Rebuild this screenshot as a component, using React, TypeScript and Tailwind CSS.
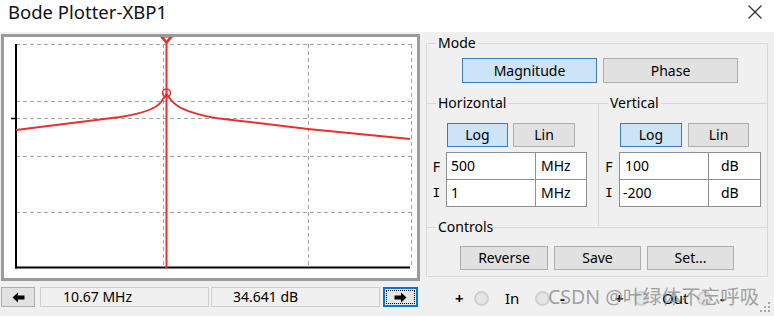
import React from "react";

const Btn = ({
  className = "",
  sel = false,
  children,
}: {
  className?: string;
  sel?: boolean;
  children: React.ReactNode;
}) => (
  <div
    className={`flex items-center justify-center border text-[14px] leading-none text-black ${
      sel ? "bg-[#cce4f7] border-[#3d7ab8]" : "bg-[#e1e1e1] border-[#adadad]"
    } ${className}`}
  >
    {children}
  </div>
);

const Cell = ({ className = "", children }: { className?: string; children: React.ReactNode }) => (
  <div className={`h-[28px] border border-[#8f8f8f] bg-white flex items-center text-[14px] leading-none text-black ${className}`}>
    {children}
  </div>
);

const ArrowLeft = () => (
  <svg width="13" height="11" viewBox="0 0 13 11">
    <path d="M0.5,5.5 L6,0.5 L6,3.5 L12.5,3.5 L12.5,7.5 L6,7.5 L6,10.5 Z" fill="#000" />
  </svg>
);
const ArrowRight = () => (
  <svg width="13" height="11" viewBox="0 0 13 11">
    <path d="M12.5,5.5 L7,0.5 L7,3.5 L0.5,3.5 L0.5,7.5 L7,7.5 L7,10.5 Z" fill="#000" />
  </svg>
);

const Radio = () => (
  <span className="inline-block w-[15px] h-[15px] rounded-full border-2 border-[#cfcfcf] bg-[#e6e6e6]" />
);

const Plot = () => {
  const hs = [44.5, 101.5, 118.5, 156.5, 212.5];
  const vs = [163.5, 308.5, 411.5];
  const red = "#e8312f";
  return (
    <svg width="413" height="241" viewBox="4 37 413 241" className="block">
      <g stroke="#a3a3a3" strokeWidth="1" strokeDasharray="4 3">
        {hs.map((y) => (
          <line key={"h" + y} x1="16" y1={y} x2="411" y2={y} />
        ))}
        {vs.map((x) => (
          <line key={"v" + x} x1={x} y1="44" x2={x} y2="268" />
        ))}
      </g>
      <line x1="16" y1="44" x2="16" y2="268.5" stroke="#000" strokeWidth="2" />
      <line x1="15" y1="267.5" x2="410" y2="267.5" stroke="#000" strokeWidth="2" />
      <line x1="11" y1="118.5" x2="16" y2="118.5" stroke="#000" strokeWidth="1.5" />
      <path
        d="M16,130 L120,117 C140,114 155,110 161,102 L166.5,94 L171,100 C177,108 190,113 215,118 L308,129 L410,139"
        fill="none"
        stroke={red}
        strokeWidth="2"
      />
      <line x1="166.5" y1="37" x2="166.5" y2="268" stroke={red} strokeWidth="2" />
      <circle cx="166.5" cy="93" r="4" fill="none" stroke={red} strokeWidth="1.5" />
      <path d="M160,37 L173,37 L166.5,44.5 Z" fill={red} />
      <path d="M164,37.5 L169,37.5 L166.5,40.5 Z" fill="#fff" />
    </svg>
  );
};

export default function App() {
  return (
    <div className="relative w-[774px] h-[316px] overflow-hidden bg-[#f0f0f0] flex flex-col font-['Noto_Sans',sans-serif] text-black">
      {/* Title bar */}
      <div className="h-[32px] bg-white flex justify-between shrink-0">
        <div className="pl-[8px] mt-[1px] text-[18.5px] leading-[22px] text-[#111]">Bode Plotter-XBP1</div>
        <svg width="14" height="14" viewBox="0 0 14 14" className="mr-[12px] mt-[5px]">
          <line x1="0.5" y1="0.5" x2="13.5" y2="13.5" stroke="#333" strokeWidth="1.2" />
          <line x1="13.5" y1="0.5" x2="0.5" y2="13.5" stroke="#333" strokeWidth="1.2" />
        </svg>
      </div>

      <div className="flex flex-1">
        {/* Left column */}
        <div className="w-[421px] pl-[1px] pt-[2px] flex flex-col">
          <div className="w-[419px] h-[247px] border-[3px] border-[#9b9b9b] bg-white">
            <Plot />
          </div>
          <div className="mt-[6px] flex h-[20px]">
            <div className="w-[34px] border border-[#adadad] bg-[#e1e1e1] flex items-center justify-center">
              <ArrowLeft />
            </div>
            <div className="ml-[5px] w-[169px] border border-[#cfcfcf] flex items-center pl-[22px] text-[14px] leading-none">
              10.67 MHz
            </div>
            <div className="ml-[2px] w-[169px] border border-[#cfcfcf] flex items-center pl-[21px] text-[14px] leading-none">
              34.641 dB
            </div>
            <div className="ml-[3px] w-[35px] border-2 border-[#0078d7] bg-[#e5e5e5] p-[1px]">
              <div className="h-full w-full border border-dotted border-black flex items-center justify-center">
                <ArrowRight />
              </div>
            </div>
          </div>
        </div>

        {/* Right column */}
        <div className="w-[353px] pl-[5px] pt-[2px] flex flex-col">
          <fieldset className="w-[342px] border border-[#d8d8d8]">
            <legend className="ml-[9px] px-[2px] text-[14px] leading-[18px]">Mode</legend>
            <div className="flex pt-[6px] pl-[35px] gap-[6px]">
              <Btn sel className="w-[135px] h-[25px]">Magnitude</Btn>
              <Btn className="w-[135px] h-[25px]">Phase</Btn>
            </div>

            <div className="flex mt-[11px]">
              <fieldset className="w-[171px] border-t border-[#d8d8d8] pb-[19px]">
                <legend className="ml-[9px] px-[2px] text-[14px] leading-[18px]">Horizontal</legend>
                <div className="flex pt-[11px] pl-[20px] gap-[5px]">
                  <Btn sel className="w-[61px] h-[24px]">Log</Btn>
                  <Btn className="w-[62px] h-[24px]">Lin</Btn>
                </div>
                <div className="mt-[5px] flex flex-col">
                  <div className="flex">
                    <div className="w-[19px] flex items-center justify-center text-[14px]">F</div>
                    <Cell className="w-[90px] pl-[4px]">500</Cell>
                    <Cell className="w-[52px] -ml-px pl-[5px]">MHz</Cell>
                  </div>
                  <div className="flex -mt-px">
                    <div className="w-[19px] flex items-center justify-center text-[13px] font-['DejaVu_Sans_Mono',monospace]">I</div>
                    <Cell className="w-[90px] pl-[4px]">1</Cell>
                    <Cell className="w-[52px] -ml-px pl-[5px]">MHz</Cell>
                  </div>
                </div>
              </fieldset>
              <fieldset className="w-[169px] border-t border-l border-[#d8d8d8] pb-[19px]">
                <legend className="ml-[9px] px-[2px] text-[14px] leading-[18px]">Vertical</legend>
                <div className="flex pt-[11px] pl-[21px] gap-[6px]">
                  <Btn sel className="w-[62px] h-[24px]">Log</Btn>
                  <Btn className="w-[61px] h-[24px]">Lin</Btn>
                </div>
                <div className="mt-[5px] flex flex-col">
                  <div className="flex">
                    <div className="w-[20px] flex items-center justify-center text-[14px]">F</div>
                    <Cell className="w-[90px] pl-[5px]">100</Cell>
                    <Cell className="w-[53px] -ml-px pl-[12px]">dB</Cell>
                  </div>
                  <div className="flex -mt-px">
                    <div className="w-[20px] flex items-center justify-center text-[13px] font-['DejaVu_Sans_Mono',monospace]">I</div>
                    <Cell className="w-[90px] pl-[3px]">-200</Cell>
                    <Cell className="w-[53px] -ml-px pl-[12px]">dB</Cell>
                  </div>
                </div>
              </fieldset>
            </div>

            <fieldset className="-mt-[8px] border-t border-[#d8d8d8] pb-[6px]">
              <legend className="ml-[9px] px-[2px] text-[14px] leading-[18px]">Controls</legend>
              <div className="flex pt-[10px] pl-[33px] gap-[6px]">
                <Btn className="w-[88px] h-[24px]">Reverse</Btn>
                <Btn className="w-[87px] h-[24px]">Save</Btn>
                <Btn className="w-[87px] h-[24px]">Set...</Btn>
              </div>
            </fieldset>
          </fieldset>

          <div className="relative mt-[11px] h-[20px] -ml-[5px] flex items-center text-[15px] leading-none">
            <span className="ml-[34px] w-[9px] font-bold">+</span>
            <span className="ml-[10px] flex"><Radio /></span>
            <span className="ml-[16px] w-[15px]">In</span>
            <span className="ml-[15px] flex"><Radio /></span>
            <span className="ml-[10px] w-[8px] font-bold">-</span>
            <span className="ml-[47px] w-[9px] font-bold">+</span>
            <span className="ml-[10px] flex"><Radio /></span>
            <span className="ml-[13px] w-[26px]">Out</span>
            <span className="ml-[9px] flex"><Radio /></span>
            <span className="ml-[8px] w-[8px] font-bold">-</span>
            <div className="absolute left-[127px] top-[-3px] whitespace-nowrap text-[19.5px] leading-[24px] text-[#8a8a8a]/80 font-['Noto_Sans','Noto_Sans_CJK_SC',sans-serif]">
              CSDN @叶绿体不忘呼吸
            </div>
          </div>
        </div>
      </div>

      <svg width="12" height="12" viewBox="0 0 12 12" className="absolute right-[3px] bottom-[3px]">
        <g fill="#a8a8a8">
          <rect x="9" y="1" width="2" height="2" />
          <rect x="5" y="5" width="2" height="2" />
          <rect x="9" y="5" width="2" height="2" />
          <rect x="1" y="9" width="2" height="2" />
          <rect x="5" y="9" width="2" height="2" />
          <rect x="9" y="9" width="2" height="2" />
        </g>
      </svg>
    </div>
  );
}
